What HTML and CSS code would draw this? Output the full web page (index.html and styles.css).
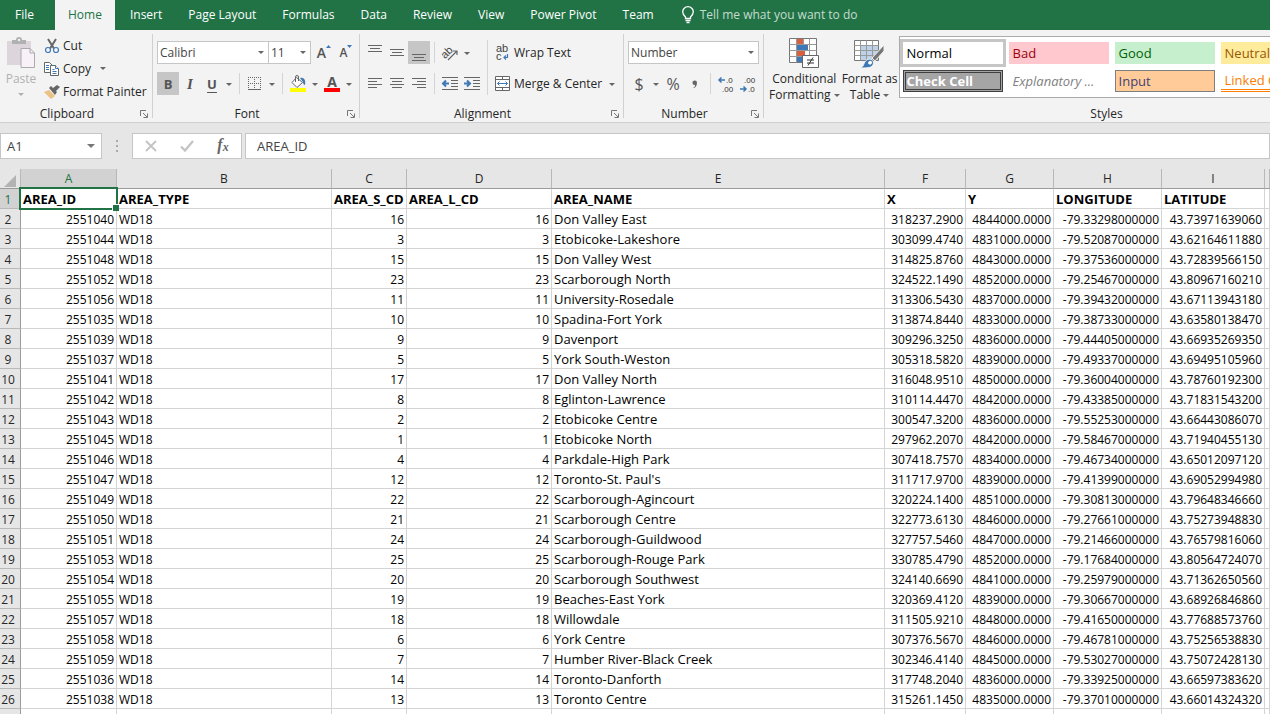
FILE: index.html
```html
<!DOCTYPE html>
<html lang="en">
<head>
    <meta charset="UTF-8">
    <title>Ward areas</title>
    <link rel="stylesheet" href="styles.css">
</head>
<body>
    <nav class="tabs">
        <button class="tab file">File</button>
        <button class="tab active">Home</button>
        <button class="tab">Insert</button>
        <button class="tab">Page Layout</button>
        <button class="tab">Formulas</button>
        <button class="tab">Data</button>
        <button class="tab">Review</button>
        <button class="tab">View</button>
        <button class="tab">Power Pivot</button>
        <button class="tab">Team</button>
        <button class="tab tell-me">
            <svg width="12" height="18" viewBox="0 0 12 18" fill="none" stroke="#fff" stroke-width="1.3"><path d="M3.5 12.5V11C2 9.500.7 8.200.7 5.800a5.300 5.100 0 0 1 10.600 0c0 2.400-1.300 3.700-2.800 5.200v1.500zM3.500 14.500h5M4.500 16.500h3"/></svg>
            Tell me what you want to do
        </button>
    </nav>

    <div class="ribbon">
        <!-- Clipboard -->
        <section class="group clipboard">
            <div class="group-body">
                <button class="paste">
                    <svg width="28" height="32" viewBox="0 0 28 32"><path d="M0 4h24v24H0z" fill="#dcd6dc"/><path d="M5 7V3h4a3 3 0 0 1 6 0h4v4z" fill="#b1b1b1"/><circle cx="12" cy="3" r="1.200" fill="#f3f3f3"/><path d="M14 11.500h9l4.500 4.500v14.500H14z" fill="#f8f2f8" stroke="#aaa"/><path d="M23 11.500V16h4.500" fill="none" stroke="#aaa"/></svg>
                    <span>Paste</span>
                    <i class="caret"></i>
                </button>
                <div class="clip-list">
                    <button class="clip-item">
                        <svg width="16" height="16" viewBox="0 0 16 16" fill="none"><path d="M4 1l6 9.500M12 1L6 10.500" stroke="#666" stroke-width="2"/><circle cx="4" cy="12" r="2.500" stroke="#3f78b5" stroke-width="1.200"/><circle cx="12" cy="12" r="2.500" stroke="#3f78b5" stroke-width="1.200"/></svg>
                        Cut
                    </button>
                    <button class="clip-item">
                        <svg width="16" height="16" viewBox="0 0 16 16" fill="#fff" stroke="#666"><path d="M.5 1.500h5l3 3v7h-8z"/><path d="M2 4.500h3M2 6.500h3M2 8.500h3" stroke="#3f78b5"/><path d="M6.500 4.500h5l3 3v7h-8z"/><path d="M11.500 4.500v3h3M8.500 8.500h2M8.500 10.500h4M8.500 12.500h4" stroke="#3f78b5"/></svg>
                        Copy <i class="caret"></i>
                    </button>
                    <button class="clip-item">
                        <svg width="16" height="16" viewBox="0 0 16 16"><path d="M0 8l5-2 6 6-4 3-3-3z" fill="#eac282"/><path d="M5 4l2-2 6 6-2 3zM9 4l4-3 3 2-4 4z" fill="#666"/></svg>
                        Format Painter
                    </button>
                </div>
            </div>
            <div class="group-name">Clipboard<svg class="launcher" width="8" height="8" viewBox="0 0 8 8" fill="none" stroke="#777"><path d="M.5 6V.5H6M3 3l4 4M7.500 3.500v4h-4"/></svg></div>
        </section>

        <!-- Font -->
        <section class="group font">
            <div class="group-body rows">
                <div class="row">
                    <span class="combo font-name"><select aria-label="Font"><option>Calibri</option></select></span>
                    <span class="combo font-size"><select aria-label="Font size"><option>11</option></select></span>
                    <button class="tool grow" aria-label="Increase font size"><span class="big-a">A</span><svg width="5" height="3" viewBox="0 0 5 3"><path d="M0 3l2.500-3L5 3z" fill="#3f78b5"/></svg></button>
                    <button class="tool grow" aria-label="Decrease font size"><span class="small-a">A</span><svg width="5" height="3" viewBox="0 0 5 3"><path d="M0 0l2.500 3L5 0z" fill="#3f78b5"/></svg></button>
                </div>
                <div class="row">
                    <button class="tool pressed bold">B</button>
                    <button class="tool italic">I</button>
                    <button class="tool underline">U</button>
                    <button class="drop" aria-label="Underline style"><i class="caret"></i></button>
                    <i class="sep"></i>
                    <button class="tool" aria-label="Borders"><svg width="14" height="14" viewBox="0 0 14 14" fill="none" stroke="#666"><path d="M.5 0v12M6.500 0v12M12.500 0v12M0 .5h13M0 6.500h13" stroke-dasharray="1 1"/><path d="M0 12.500h13"/></svg></button>
                    <button class="drop" aria-label="Border style"><i class="caret"></i></button>
                    <i class="sep"></i>
                    <button class="tool" aria-label="Fill color"><svg width="16" height="17" viewBox="0 0 16 17"><path d="M10 3c4-1 6 2 5 7-1 0-2-1-2-3z" fill="#3f78b5"/><path d="M6.500 2.500l6 5-5.500 5-5-5z" fill="#fff" stroke="#666"/><path d="M5.500 7V2a1.500 1.500 0 0 1 3 0v4" fill="none" stroke="#666"/><path d="M0 13h16v4H0z" fill="#ff0"/></svg></button>
                    <button class="drop" aria-label="Fill color list"><i class="caret"></i></button>
                    <button class="tool font-color" aria-label="Font color">A</button>
                    <button class="drop" aria-label="Font color list"><i class="caret"></i></button>
                </div>
            </div>
            <div class="group-name">Font<svg class="launcher" width="8" height="8" viewBox="0 0 8 8" fill="none" stroke="#777"><path d="M.5 6V.5H6M3 3l4 4M7.500 3.500v4h-4"/></svg></div>
        </section>

        <!-- Alignment -->
        <section class="group alignment">
            <div class="group-body">
                <div class="rows">
                    <div class="row">
                        <button class="tool" aria-label="Top align"><svg width="14" height="16" viewBox="0 0 14 16" stroke="#666"><path d="M0 .5h14M2 3.500h10M0 6.500h14"/></svg></button>
                        <button class="tool" aria-label="Middle align"><svg width="14" height="16" viewBox="0 0 14 16" stroke="#666"><path d="M0 4.500h14M2 7.500h10M0 10.500h14"/></svg></button>
                        <button class="tool pressed" aria-label="Bottom align"><svg width="14" height="16" viewBox="0 0 14 16" stroke="#666"><path d="M0 9.500h14M2 12.500h10M0 15.500h14"/></svg></button>
                        <i class="sep"></i>
                        <button class="tool" aria-label="Orientation"><svg width="18" height="18" viewBox="0 0 18 18"><text x="0" y="12" class="icon-text" transform="rotate(-45 6 9)">ab</text><path d="M7 16l9-9M12 7h4v4" fill="none" stroke="#666" stroke-width="1.200"/></svg></button>
                        <button class="drop" aria-label="Orientation list"><i class="caret"></i></button>
                    </div>
                    <div class="row">
                        <button class="tool" aria-label="Align left"><svg width="14" height="14" viewBox="0 0 14 14" stroke="#666"><path d="M0 1.500h14M0 4.500h9M0 7.500h14M0 10.500h9"/></svg></button>
                        <button class="tool" aria-label="Center"><svg width="14" height="14" viewBox="0 0 14 14" stroke="#666"><path d="M0 1.500h14M2 4.500h10M0 7.500h14M2 10.500h10"/></svg></button>
                        <button class="tool" aria-label="Align right"><svg width="14" height="14" viewBox="0 0 14 14" stroke="#666"><path d="M0 1.500h14M5 4.500h9M0 7.500h14M5 10.500h9"/></svg></button>
                        <i class="sep"></i>
                        <button class="tool" aria-label="Decrease indent"><svg width="16" height="14" viewBox="0 0 16 14" stroke="#666"><path d="M0 .5h16M9 3.500h7M9 6.500h7M9 9.500h7M0 12.500h16"/><path d="M7 6.500H1.500M4 3.500L1 6.500l3 3" fill="none" stroke="#3f78b5" stroke-width="2"/></svg></button>
                        <button class="tool" aria-label="Increase indent"><svg width="16" height="14" viewBox="0 0 16 14" stroke="#666"><path d="M0 .5h16M9 3.500h7M9 6.500h7M9 9.500h7M0 12.500h16"/><path d="M0 6.500h5.500M3 3.500l3 3-3 3" fill="none" stroke="#3f78b5" stroke-width="2"/></svg></button>
                    </div>
                </div>
                <i class="sep tall"></i>
                <div class="rows">
                    <div class="row">
                        <button class="wide">
                            <svg width="16" height="20" viewBox="0 0 16 20"><text x="1" y="9" class="icon-text">ab</text><text x="1" y="17" class="icon-text">c</text><path d="M12.500 11v3.500H9M11 12.500l-2 2 2 2" fill="none" stroke="#3f78b5" stroke-width="1.200"/></svg>
                            Wrap Text
                        </button>
                    </div>
                    <div class="row">
                        <button class="wide">
                            <svg width="16" height="16" viewBox="0 0 16 16" fill="#fff" stroke="#666"><path d="M.5.5h14v14H.5zM7.500.5v14M.5 3.500h14M.5 11.500h14"/><path d="M1 4h13v7H1z" stroke="none"/><path d="M2.500 7.500h10M4.500 5.500l-2 2 2 2M10.500 5.500l2 2-2 2" fill="none" stroke="#3f78b5"/></svg>
                            Merge &amp; Center
                        </button>
                        <button class="drop merge-drop" aria-label="Merge list"><i class="caret"></i></button>
                    </div>
                </div>
            </div>
            <div class="group-name">Alignment<svg class="launcher" width="8" height="8" viewBox="0 0 8 8" fill="none" stroke="#777"><path d="M.5 6V.5H6M3 3l4 4M7.500 3.500v4h-4"/></svg></div>
        </section>

        <!-- Number -->
        <section class="group number">
            <div class="group-body rows">
                <div class="row">
                    <span class="combo number-format"><select aria-label="Number format"><option>Number</option></select></span>
                </div>
                <div class="row">
                    <button class="tool symbol">$</button>
                    <button class="drop" aria-label="Currency list"><i class="caret"></i></button>
                    <button class="tool symbol percent">%</button>
                    <button class="tool" aria-label="Comma style"><svg width="6" height="10" viewBox="0 0 6 10"><path d="M1 9c2-1 2-2 2-3a2.300 2.300 0 1 1 2-2.500C5 7 3.500 9 1 9z" fill="#666"/></svg></button>
                    <i class="sep"></i>
                    <button class="tool" aria-label="Increase decimal"><svg width="16" height="18" viewBox="0 0 16 18"><text x="8" y="8" class="digits">.0</text><text x="4" y="17" class="digits">.00</text><path d="M7 5H1.500M3.500 2.500L1 5l2.500 2.500" fill="none" stroke="#3f78b5" stroke-width="1.500"/></svg></button>
                    <button class="tool" aria-label="Decrease decimal"><svg width="16" height="18" viewBox="0 0 16 18"><text x="4" y="8" class="digits">.00</text><text x="8" y="17" class="digits">.0</text><path d="M0 14h5.500M3.500 11.500L6 14l-2.500 2.500" fill="none" stroke="#3f78b5" stroke-width="1.500"/></svg></button>
                </div>
            </div>
            <div class="group-name">Number<svg class="launcher" width="8" height="8" viewBox="0 0 8 8" fill="none" stroke="#777"><path d="M.5 6V.5H6M3 3l4 4M7.500 3.500v4h-4"/></svg></div>
        </section>

        <!-- Styles -->
        <section class="group styles">
            <div class="group-body">
                <button class="big">
                    <svg width="32" height="32" viewBox="0 0 32 32"><path d="M1.500 1.500h27v24h-27z" fill="#fff" stroke="#777"/><path d="M9 2h6v5H9zM9 14h8v5H9z" fill="#d9603f"/><path d="M9 8h11v5H9zM9 20h5v5H9z" fill="#3f78b5"/><path d="M8.500 1.500v24M15.500 1.500v6M21.500 1.500v24M1.500 7.500h27M1.500 13.500h27M1.500 19.500h27" stroke="#999" fill="none"/><path d="M14.500 18.500h16v12h-16z" fill="#fff" stroke="#666"/><path d="M19 23h7M19 26h7M25 20.500l-5 8" stroke="#333" fill="none"/></svg>
                    <span>Conditional</span>
                    <span>Formatting <i class="caret"></i></span>
                </button>
                <button class="big">
                    <svg width="32" height="32" viewBox="0 0 32 32"><path d="M.5 3.500h24v20H.5z" fill="#fff" stroke="#777"/><path d="M7 9h17v14H7z" fill="#bdd2e9"/><path d="M6.500 3.500v20M12.500 3.500v20M18.500 3.500v20M.5 8.500h24M.5 13.500h24M.5 18.500h24" stroke="#999" fill="none"/><path d="M30 8v6l-9 10-3-3z" fill="#777" stroke="#f3f3f3"/><path d="M6 31c5-1 3-8 9-9 5 0 6 5 2 8-3 1-7 1-11 1z" fill="#3f78b5" stroke="#f3f3f3"/><path d="M14 26c1-3 4-3 4 0-1 2-3 2-4 0z" fill="#fff"/></svg>
                    <span>Format as</span>
                    <span>Table <i class="caret"></i></span>
                </button>
                <div class="gallery">
                    <button class="style normal">Normal</button>
                    <button class="style bad">Bad</button>
                    <button class="style good">Good</button>
                    <button class="style neutral">Neutral</button>
                    <button class="style check">Check Cell</button>
                    <button class="style explanatory">Explanatory ...</button>
                    <button class="style input">Input</button>
                    <button class="style linked">Linked Cell</button>
                </div>
            </div>
            <div class="group-name">Styles</div>
        </section>
    </div>

    <div class="formula-bar">
        <div class="name-box">
            <input type="text" value="A1" aria-label="Name box">
            <i class="caret"></i>
        </div>
        <svg class="dots" width="2" height="12" viewBox="0 0 2 12" fill="#aaa"><path d="M0 0h2v2H0zM0 5h2v2H0zM0 10h2v2H0z"/></svg>
        <div class="formula-buttons">
            <button aria-label="Cancel"><svg width="12" height="12" viewBox="0 0 12 12"><path d="M1 1l10 10M11 1L1 11" stroke="#c3c3c3" stroke-width="1.800"/></svg></button>
            <button aria-label="Enter"><svg width="14" height="12" viewBox="0 0 14 12"><path d="M1 6.500L5 10.500 13 1" fill="none" stroke="#c3c3c3" stroke-width="2.200"/></svg></button>
            <button class="fx" aria-label="Insert function">f<sub>x</sub></button>
        </div>
        <input class="formula" type="text" value="AREA_ID" aria-label="Formula">
    </div>

    <div class="sheet">
        <table>
            <colgroup>
                <col class="col-num"><col class="col-a"><col class="col-b"><col class="col-c"><col class="col-d"><col class="col-e"><col class="col-f"><col class="col-g"><col class="col-h"><col class="col-i"><col>
            </colgroup>
            <thead>
                <tr>
                    <th class="corner"><svg width="13" height="12" viewBox="0 0 13 12"><path d="M13 0v12H1z" fill="#b3b3b3"/></svg></th>
                    <th class="selected">A</th><th>B</th><th>C</th><th>D</th><th>E</th><th>F</th><th>G</th><th>H</th><th>I</th><th></th>
                </tr>
            </thead>
            <tbody id="rows"></tbody>
        </table>
    </div>

    <script src="script.js"></script>
</body>
</html>
```

FILE: styles.css
```css
* {
    box-sizing: border-box;
}
body {
    display: flex;
    flex-direction: column;
    height: 100vh;
    margin: 0;
    overflow: hidden;
    background: #e6e6e6;
    color: #262626;
    font-family: "Open Sans", "Noto Sans", sans-serif;
    font-size: 12px;
    line-height: 16px;
}
button, input, select {
    margin: 0;
    padding: 0;
    border: none;
    border-radius: 0;
    background: none;
    color: inherit;
    font: inherit;
}
button {
    white-space: nowrap;
}
svg {
    flex: none;
    overflow: visible;
}

/* tabs */
.tabs {
    display: flex;
    flex: none;
    height: 30px;
    background: #217346;
    color: #fff;
}
.tab {
    padding: 0 13px;
}
.file {
    margin-right: 8px;
    padding-left: 15px;
}
.active {
    margin-right: 2px;
    background: #f3f3f3;
    color: #217346;
}
.tell-me {
    display: flex;
    align-items: center;
    gap: 6px;
    padding-left: 15px;
    color: #c5dccf;
}

/* ribbon */
.ribbon {
    display: flex;
    flex: none;
    height: 93px;
    padding-top: 4px;
    border-bottom: 1px solid #d0d0d0;
    background: #f3f3f3;
    overflow: hidden;
}
.group {
    display: flex;
    flex-direction: column;
    flex: none;
    height: 84px;
    border-right: 1px solid #d0d0d0;
}
.group-body {
    display: flex;
    flex: none;
    height: 72px;
}
.group-name {
    position: relative;
    padding-right: 18px;
    text-align: center;
}
.launcher {
    position: absolute;
    right: 4px;
    bottom: 4px;
}
.caret {
    display: inline-block;
    border: 3px solid transparent;
    border-top-color: #666;
    border-bottom: none;
    vertical-align: 2px;
}
.clipboard {
    width: 153px;
}
.font {
    width: 207px;
}
.alignment {
    width: 264px;
}
.number {
    width: 140px;
}
.styles {
    width: 686px;
}
.styles .group-name {
    padding-right: 0;
}
.paste {
    display: flex;
    flex-direction: column;
    align-items: center;
    width: 40px;
    padding-top: 3px;
    padding-left: 2px;
    color: #b1b1b1;
}
.paste svg, .big svg {
    margin-bottom: 2px;
}
.paste .caret {
    margin-top: 6px;
    border-top-color: #b1b1b1;
}
.clip-list {
    display: flex;
    flex-direction: column;
    padding-left: 4px;
}
.clip-item {
    display: flex;
    align-items: center;
    gap: 3px;
    height: 23px;
}
.clip-item .caret {
    margin-left: 6px;
}
.rows {
    display: flex;
    flex-direction: column;
    gap: 8px;
    padding-top: 7px;
}
.group > .rows,
.alignment .rows:first-child {
    padding-left: 4px;
}
.row {
    display: flex;
    align-items: center;
    height: 23px;
}
.combo {
    position: relative;
    border: 1px solid #c6c6c6;
    background: #fff;
    color: #444;
}
.combo::after {
    content: "";
    position: absolute;
    top: 9px;
    right: 4px;
    border: 3px solid transparent;
    border-top-color: #666;
    border-bottom: none;
}
.combo select {
    display: block;
    width: 100%;
    height: 21px;
    padding-left: 2px;
    appearance: none;
}
.font-name {
    width: 112px;
}
.font-size {
    width: 42px;
    border-left: none;
    margin-right: 2px;
}
.number-format {
    width: 131px;
}
.tool {
    display: flex;
    align-items: center;
    justify-content: center;
    width: 22px;
    height: 23px;
    color: #555;
}
.pressed {
    background: #c6c6c6;
}
.drop {
    width: 12px;
    height: 23px;
}
.sep {
    width: 1px;
    height: 21px;
    margin: 0 4px;
    background: #d4d4d4;
}
.tall {
    height: 55px;
    margin-top: 6px;
}
.grow {
    align-items: flex-start;
    padding-top: 4px;
}
.big-a {
    font-size: 14px;
    font-weight: 600;
}
.small-a {
    font-size: 12px;
    font-weight: 600;
}
.bold, .italic, .underline {
    font-size: 13px;
    font-weight: bold;
}
.italic {
    font-family: "Liberation Serif", serif;
    font-style: italic;
    font-size: 15px;
}
.underline {
    text-decoration: underline;
    text-underline-offset: 3px;
}
.font-color {
    width: 16px;
    height: 17px;
    margin: 0 3px;
    border-bottom: 4px solid #f00;
    font-size: 14px;
    font-weight: bold;
}
.icon-text {
    fill: #444;
    font-family: "Liberation Sans", sans-serif;
    font-size: 11px;
}
.digits {
    fill: #333;
    font-family: "Liberation Sans", sans-serif;
    font-size: 8px;
}
.symbol {
    font-size: 16px;
}
.wide {
    display: flex;
    align-items: center;
    gap: 3px;
    padding-left: 3px;
}
.merge-drop {
    margin-left: 4px;
}
.styles .group-body {
    padding-left: 4px;
}
.big {
    display: flex;
    flex-direction: column;
    align-items: center;
    padding: 3px 1px 0;
}
.gallery {
    display: grid;
    grid-template-columns: repeat(4, 100px);
    grid-auto-rows: 22px;
    gap: 6px;
    flex: 1;
    height: 62px;
    margin-top: 2px;
    padding: 5px 3px;
    border: 1px solid #ababab;
    background: #fff;
}
.style {
    padding: 0 4px;
    font-size: 13px;
    text-align: left;
}
.normal {
    outline: 3px solid #c6c6c6;
    color: #000;
}
.bad {
    background: #ffc7ce;
    color: #9c0006;
}
.good {
    background: #c6efce;
    color: #006100;
}
.neutral {
    background: #ffeb9c;
    color: #9c5700;
}
.check {
    border: 3px double #3f3f3f;
    background: #a5a5a5;
    color: #fff;
    font-weight: bold;
    padding: 0 1px;
}
.explanatory {
    color: #7f7f7f;
    font-style: italic;
}
.input {
    border: 1px solid #7f7f7f;
    background: #ffcc99;
    color: #3f3f76;
    padding: 0 3px;
}
.linked {
    border-bottom: 3px double #ff8001;
    color: #fa7d00;
}

/* formula bar */
.formula-bar {
    display: flex;
    flex: none;
    align-items: center;
    padding: 10px 0;
    color: #444;
    font-size: 13px;
}
.name-box, .formula-buttons, .formula {
    height: 26px;
    border: 1px solid #c6c6c6;
    background: #fff;
}
.name-box {
    display: flex;
    align-items: center;
    width: 102px;
    padding: 0 6px;
}
.name-box input {
    flex: 1;
    min-width: 0;
}
.name-box .caret {
    border-width: 4px 4px 0;
    border-top-color: #777;
}
.dots {
    margin: 0 14px;
}
.formula-buttons {
    display: flex;
    width: 110px;
    margin-right: 3px;
}
.formula-buttons button {
    flex: 1;
}
.formula-buttons svg {
    display: block;
    margin: auto;
}
.formula-buttons .fx {
    color: #666;
    font-family: "Liberation Serif", serif;
    font-size: 16px;
    font-style: italic;
    font-weight: bold;
}
.fx sub {
    font-size: 12px;
    vertical-align: -1px;
}
.formula {
    flex: 1;
    padding-left: 11px;
}

/* sheet */
.sheet {
    flex: 1;
    overflow: hidden;
    color: #000;
}
table {
    width: 100%;
    table-layout: fixed;
    border-collapse: separate;
    border-spacing: 0;
}
.col-num { width: 21px; }
.col-a { width: 96px; }
.col-b { width: 215px; }
.col-c { width: 75px; }
.col-d { width: 145px; }
.col-e { width: 333px; }
.col-f { width: 81px; }
.col-g { width: 88px; }
.col-h { width: 108px; }
.col-i { width: 103px; }
th, td {
    height: 20px;
    padding: 2px 2px 0;
    border-right: 1px solid #d4d4d4;
    border-bottom: 1px solid #d4d4d4;
    background: #fff;
    line-height: 17px;
    text-align: left;
    white-space: nowrap;
}
th {
    border-color: #b8b8b8;
    background: #e6e6e6;
    color: #262626;
    font-weight: normal;
    text-align: center;
}
thead th {
    padding-top: 0;
    border-bottom-color: #9b9b9b;
    line-height: 19px;
}
tbody th {
    padding-right: 4px;
    padding-left: 0;
    border-right-color: #9b9b9b;
}
.corner {
    padding: 0;
}
.corner svg {
    display: block;
    margin: 5px 0 0 3px;
}
.selected {
    background: #d2d2d2;
    color: #217346;
}
.field, .name {
    font-size: 13px;
}
.field {
    font-weight: bold;
}
.value {
    text-align: right;
}
.cursor {
    position: relative;
}
.cursor::before {
    content: "";
    position: absolute;
    inset: -2px;
    border: 2px solid #217346;
}
.cursor::after {
    content: "";
    position: absolute;
    right: -3px;
    bottom: -3px;
    width: 6px;
    height: 6px;
    border: solid #fff;
    border-width: 1px 0 0 1px;
    background: #217346;
}
```

FILE: script.js
```js
const fields = ['AREA_ID', 'AREA_TYPE', 'AREA_S_CD', 'AREA_L_CD', 'AREA_NAME', 'X', 'Y', 'LONGITUDE', 'LATITUDE'];

// id, code, name, x, y, longitude, latitude
const areas = [
    [2551040, 16, 'Don Valley East', '318237.2900', '4844000.0000', '-79.33298000000', '43.73971639060'],
    [2551044, 3, 'Etobicoke-Lakeshore', '303099.4740', '4831000.0000', '-79.52087000000', '43.62164611880'],
    [2551048, 15, 'Don Valley West', '314825.8760', '4843000.0000', '-79.37536000000', '43.72839566150'],
    [2551052, 23, 'Scarborough North', '324522.1490', '4852000.0000', '-79.25467000000', '43.80967160210'],
    [2551056, 11, 'University-Rosedale', '313306.5430', '4837000.0000', '-79.39432000000', '43.67113943180'],
    [2551035, 10, 'Spadina-Fort York', '313874.8440', '4833000.0000', '-79.38733000000', '43.63580138470'],
    [2551039, 9, 'Davenport', '309296.3250', '4836000.0000', '-79.44405000000', '43.66935269350'],
    [2551037, 5, 'York South-Weston', '305318.5820', '4839000.0000', '-79.49337000000', '43.69495105960'],
    [2551041, 17, 'Don Valley North', '316048.9510', '4850000.0000', '-79.36004000000', '43.78760192300'],
    [2551042, 8, 'Eglinton-Lawrence', '310114.4470', '4842000.0000', '-79.43385000000', '43.71831543200'],
    [2551043, 2, 'Etobicoke Centre', '300547.3200', '4836000.0000', '-79.55253000000', '43.66443086070'],
    [2551045, 1, 'Etobicoke North', '297962.2070', '4842000.0000', '-79.58467000000', '43.71940455130'],
    [2551046, 4, 'Parkdale-High Park', '307418.7570', '4834000.0000', '-79.46734000000', '43.65012097120'],
    [2551047, 12, "Toronto-St. Paul's", '311717.9700', '4839000.0000', '-79.41399000000', '43.69052994980'],
    [2551049, 22, 'Scarborough-Agincourt', '320224.1400', '4851000.0000', '-79.30813000000', '43.79648346660'],
    [2551050, 21, 'Scarborough Centre', '322773.6130', '4846000.0000', '-79.27661000000', '43.75273948830'],
    [2551051, 24, 'Scarborough-Guildwood', '327757.5460', '4847000.0000', '-79.21466000000', '43.76579816060'],
    [2551053, 25, 'Scarborough-Rouge Park', '330785.4790', '4852000.0000', '-79.17684000000', '43.80564724070'],
    [2551054, 20, 'Scarborough Southwest', '324140.6690', '4841000.0000', '-79.25979000000', '43.71362650560'],
    [2551055, 19, 'Beaches-East York', '320369.4120', '4839000.0000', '-79.30667000000', '43.68926846860'],
    [2551057, 18, 'Willowdale', '311505.9210', '4848000.0000', '-79.41650000000', '43.77688573760'],
    [2551058, 6, 'York Centre', '307376.5670', '4846000.0000', '-79.46781000000', '43.75256538830'],
    [2551059, 7, 'Humber River-Black Creek', '302346.4140', '4845000.0000', '-79.53027000000', '43.75072428130'],
    [2551036, 14, 'Toronto-Danforth', '317748.2040', '4836000.0000', '-79.33925000000', '43.66597383620'],
    [2551038, 13, 'Toronto Centre', '315261.1450', '4835000.0000', '-79.37010000000', '43.66014324320']
];

let html = '<tr><th class="selected">1</th>';
fields.forEach((name, i) => {
    html += `<td class="field${i === 0 ? ' cursor' : ''}">${name}</td>`;
});
html += '<td></td></tr>';

areas.forEach(([id, code, name, x, y, lon, lat], i) => {
    html += `<tr><th>${i + 2}</th>
        <td class="value">${id}</td><td>WD18</td>
        <td class="value">${code}</td><td class="value">${code}</td><td class="name">${name}</td>
        <td class="value">${x}</td><td class="value">${y}</td>
        <td class="value">${lon}</td><td class="value">${lat}</td><td></td></tr>`;
});

// empty row under the data
html += '<tr><th></th>' + '<td></td>'.repeat(10) + '</tr>';

document.getElementById('rows').innerHTML = html;
```
